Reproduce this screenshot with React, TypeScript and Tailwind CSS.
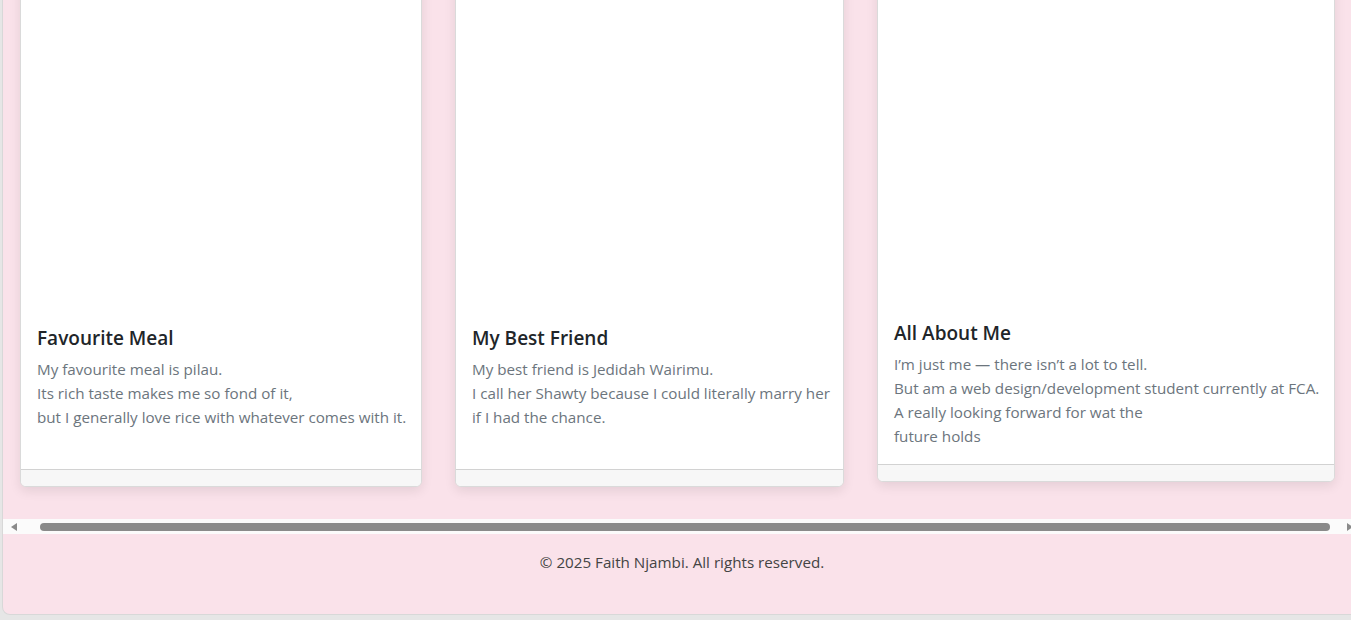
import React from 'react';

interface CardProps {
  title: string;
  lines: string[];
  width: string;
  bodyPad: string;
  lift?: boolean;
}

const Card: React.FC<CardProps> = ({ title, lines, width, bodyPad, lift }) => {
  return (
    <div
      className={`${width} ${lift ? 'mb-[5px]' : ''} shrink-0 bg-white border border-[#dadada] rounded-[6px] overflow-hidden shadow-[0_4px_12px_rgba(0,0,0,0.09)] flex flex-col`}
    >
      {/* image area (white, top is off screen) */}
      <div className="h-[340px] bg-white" />
      <div className={`px-4 pt-4 ${bodyPad}`}>
        <h5 className="text-[19px] leading-[24px] font-semibold text-[#212529] mb-[7px] whitespace-nowrap">{title}</h5>
        <p className="text-[15.2px] leading-[24px] text-[#6c757d] whitespace-nowrap">
          {lines.map((l, i) => (
            <React.Fragment key={i}>
              {l}
              {i < lines.length - 1 && <br />}
            </React.Fragment>
          ))}
        </p>
      </div>
      <div className="h-[17px] bg-[#f7f7f7] border-t border-[#d2d2d2]" />
    </div>
  );
};

const App: React.FC = () => {
  return (
    <div className="h-[620px] w-full overflow-hidden bg-[#e6e6e6] flex flex-col justify-end font-['Open_Sans',sans-serif]">
      <div className="ml-[2px] mb-[5px] w-[1360px] shrink-0 bg-[#fae2ea] border border-[#d8d8d8] border-t-0 rounded-b-[8px]">
        {/* Cards row */}
        <div className="flex items-end gap-[33px] pl-[17px] pb-[32px]">
          <Card
            title="Favourite Meal"
            width="w-[402px]"
            bodyPad="pb-[40px]"
            lines={[
              'My favourite meal is pilau.',
              'Its rich taste makes me so fond of it,',
              'but I generally love rice with whatever comes with it.',
            ]}
          />
          <Card
            title="My Best Friend"
            width="w-[389px]"
            bodyPad="pb-[40px]"
            lines={[
              'My best friend is Jedidah Wairimu.',
              'I call her Shawty because I could literally marry her',
              'if I had the chance.',
            ]}
          />
          <Card
            title="All About Me"
            width="w-[458px]"
            bodyPad="pb-4"
            lift
            lines={[
              'I\u2019m just me \u2014 there isn\u2019t a lot to tell.',
              'But am a web design/development student currently at FCA.',
              'A really looking forward for wat the',
              'future holds',
            ]}
          />
        </div>

        {/* Horizontal scrollbar */}
        <div className="h-[15px] bg-[#fbfbfb] flex items-center">
          <div className="w-[37px] flex items-center pl-[8px]">
            <div className="w-0 h-0 border-y-[4px] border-y-transparent border-r-[6px] border-r-[#8a8a8a]" />
          </div>
          <div className="w-[1290px] h-[8px] rounded-full bg-[#8a8a8a]" />
          <div className="flex-1 flex items-center justify-end pr-[8px]">
            <div className="w-0 h-0 border-y-[4px] border-y-transparent border-l-[6px] border-l-[#8a8a8a]" />
          </div>
        </div>

        {/* Footer */}
        <footer className="pt-4 pb-10 text-center">
          <p className="text-[15.2px] leading-[24px] text-[#444]">© 2025 Faith Njambi. All rights reserved.</p>
        </footer>
      </div>
    </div>
  );
};

export default App;
